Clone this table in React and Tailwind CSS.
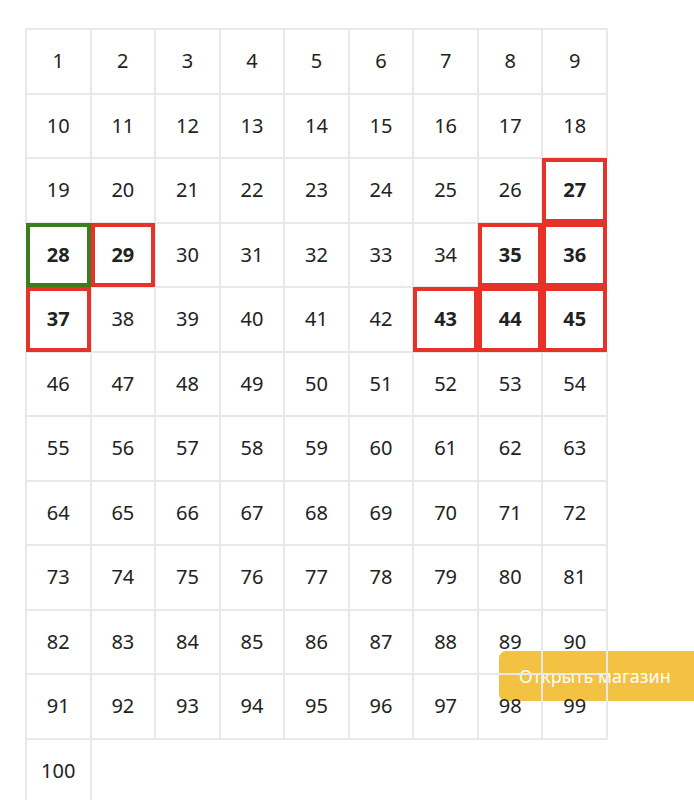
import React from "react";

const RED = new Set([27, 29, 35, 36, 37, 43, 44, 45]);
const GREEN = new Set([28]);

/**
 * Одна клетка поля
 */
const Cell = ({ n }) => {
    const red = RED.has(n);
    const green = GREEN.has(n);

    let cls =
        "h-[64.5px] flex items-center justify-center text-[20px] text-[#222222] ";
    if (red) {
        cls += "relative z-10 border-4 border-[#e5332a] font-bold";
    } else if (green) {
        cls += "relative z-10 border-4 border-[#3b7d1f] font-bold";
    } else {
        cls += "border border-[#e8e8e8] shadow-[0_0_0_1px_#e8e8e8]";
    }

    return <div className={cls}>{n}</div>;
};

const App = () => {
    const cells = Array.from({ length: 100 }, (_, i) => i + 1);

    return (
        <div
            className="relative h-[800px] w-full overflow-hidden bg-white"
            style={{ fontFamily: '"Noto Sans", "DejaVu Sans", sans-serif' }}
        >
            {/* Кнопка магазина (лежит под сеткой) */}
            <button className="absolute left-[499px] right-0 top-[651px] h-[50px] rounded-l-[7px] bg-[#f4c243] pl-5 text-left text-[18px] text-white">
                Открыть магазин
            </button>

            <div className="relative z-10 pl-[26px] pt-[29px]">
                <div className="grid w-[581px] grid-cols-9">
                    {cells.map((n) => (
                        <Cell key={n} n={n} />
                    ))}
                </div>
            </div>
        </div>
    );
};

export default App;
